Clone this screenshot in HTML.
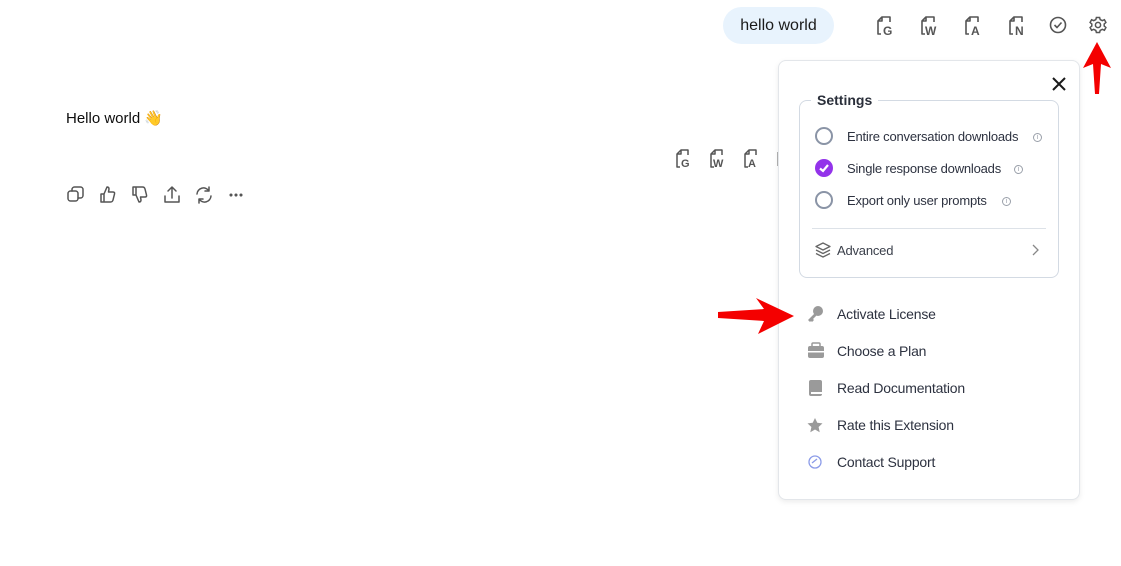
<!DOCTYPE html>
<html><head><meta charset="utf-8"><style>
*{box-sizing:border-box;margin:0;padding:0}
body{width:1121px;height:566px;background:#fff;font-family:"Liberation Sans",sans-serif;position:relative;overflow:hidden;color:#0d0d0d}
.abs{position:absolute}
svg{display:block}
.bubble{left:723px;top:7px;width:111px;height:37px;border-radius:19px;background:#e8f3fd;font-size:16px;line-height:37px;text-align:center;color:#1a1a1a}
.panel{left:778px;top:60px;width:302px;height:440px;border:1px solid #e3e6ea;border-radius:8px;background:#fff;box-shadow:0 2px 6px rgba(0,0,0,.08)}
.fs{left:799px;top:100px;width:260px;height:178px;border:1px solid #d3dae3;border-radius:8px}
.leg{left:811px;top:92px;background:#fff;padding:0 6px;font-size:14px;font-weight:bold;color:#2a2f3a}
.opt{font-size:13px;color:#2d3240;letter-spacing:-0.2px}
.radio{width:18px;height:18px;border:2px solid #8a94a6;border-radius:50%}
.info{width:9px;height:9px;border:1px solid #9aa0aa;border-radius:50%;font-size:7px;line-height:7px;text-align:center;color:#9aa0aa}
.menu{font-size:14px;color:#2d3240;letter-spacing:-0.2px}
</style></head><body>
<div class="abs bubble">hello world</div>

<!-- top toolbar icons -->
<svg class="abs" style="left:874px;top:13px" width="240" height="26">
 <g fill="none" stroke="#555" stroke-width="1.6" stroke-linejoin="round">
  <path d="M7 21 H4 V8 L8 4 H16 V9"/><path d="M4 8 H8 V4"/>
  <path d="M51 21 H48 V8 L52 4 H60 V9"/><path d="M48 8 H52 V4"/>
  <path d="M95 21 H92 V8 L96 4 H104 V9"/><path d="M92 8 H96 V4"/>
  <path d="M139 21 H136 V8 L140 4 H148 V9"/><path d="M136 8 H140 V4"/>
  <circle cx="184" cy="12" r="7.5"/><path d="M180.5 12 L183 14.5 L187.5 9.5"/>
 </g>
 <g font-family="Liberation Sans" font-weight="bold" font-size="12" fill="#555">
  <text x="9" y="22">G</text><text x="51" y="22">W</text><text x="97" y="22">A</text><text x="141" y="22">N</text>
 </g>
 <g transform="translate(224 12)" fill="none" stroke="#555" stroke-width="1.5">
  <path d="M-1.6 -7.5 L1.6 -7.5 L2.2 -5.4 L4.3 -4.3 L6.4 -5.3 L7.9 -2.5 L6.2 -1 L6.2 1 L7.9 2.5 L6.4 5.3 L4.3 4.3 L2.2 5.4 L1.6 7.5 L-1.6 7.5 L-2.2 5.4 L-4.3 4.3 L-6.4 5.3 L-7.9 2.5 L-6.2 1 L-6.2 -1 L-7.9 -2.5 L-6.4 -5.3 L-4.3 -4.3 L-2.2 -5.4 Z"/>
  <circle r="2.6"/>
 </g>
</svg>
<!-- red up arrow -->
<svg class="abs" style="left:1083px;top:40px" width="30" height="56"><path d="M14 2 L28 28 L18 24 L16 54 L12 54 L10 24 L0 28 Z" fill="#f40000"/></svg>

<div class="abs" style="left:66px;top:109px;font-size:15px">Hello world <span style="font-size:15px">👋</span></div>

<!-- mid icons -->
<svg class="abs" style="left:673px;top:146px" width="110" height="26">
 <g fill="none" stroke="#555" stroke-width="1.5" stroke-linejoin="round">
  <path d="M7 21 H4 V8 L8 4 H15 V9"/><path d="M4 8 H8 V4"/>
  <path d="M41 21 H38 V8 L42 4 H49 V9"/><path d="M38 8 H42 V4"/>
  <path d="M75 21 H72 V8 L76 4 H83 V9"/><path d="M72 8 H76 V4"/>
  <path d="M105 6 V20" stroke="#999"/>
 </g>
 <g font-family="Liberation Sans" font-weight="bold" font-size="11" fill="#555">
  <text x="8" y="21">G</text><text x="40" y="21">W</text><text x="75" y="21">A</text>
 </g>
</svg>

<!-- action icons -->
<svg class="abs" style="left:64px;top:183px" width="190" height="24" fill="none" stroke="#555" stroke-width="1.5" stroke-linejoin="round" stroke-linecap="round">
 <rect x="4" y="8" width="10" height="10" rx="2.5"/><path d="M8 8 V6.5 A2.5 2.5 0 0 1 10.5 4 H16.5 A2.5 2.5 0 0 1 19 6.5 V12.5 A2.5 2.5 0 0 1 16.5 15 H14"/>
 <path d="M37 11 H40 V19 H37 Z M40 11 L43 4 Q45 4 45 6 L44.5 9 H49 Q51 9 50.5 11 L49 17 Q48.5 19 46.5 19 H40"/>
 <path d="M69 12 H72 V4 H69 Z M72 12 L75 19 Q77 19 77 17 L76.5 14 H81 Q83 14 82.5 12 L81 6 Q80.5 4 78.5 4 H72"/>
 <path d="M108 15 V4 M104 8 L108 4 L112 8 M101 13 V19 H115 V13"/>
 <path d="M133 11 A6.5 6.5 0 0 1 145 8 M145 4 V8 H141 M147 13 A6.5 6.5 0 0 1 135 16 M135 20 V16 H139"/>
 <circle cx="167" cy="12" r=".8" fill="#555"/><circle cx="172" cy="12" r=".8" fill="#555"/><circle cx="177" cy="12" r=".8" fill="#555"/>
</svg>

<div class="abs panel"></div>
<svg class="abs" style="left:1050px;top:75px" width="18" height="18"><path d="M3 3 L15 15 M15 3 L3 15" stroke="#1a1a1a" stroke-width="2"/></svg>
<div class="abs fs"></div>
<div class="abs leg">Settings</div>

<div class="abs radio" style="left:815px;top:127px"></div>
<div class="abs opt" style="left:847px;top:129px">Entire conversation downloads</div>
<div class="abs info" style="left:1033px;top:133px">i</div>
<div class="abs" style="left:815px;top:159px;width:18px;height:18px;border-radius:50%;background:#9333ea"></div>
<svg class="abs" style="left:815px;top:159px" width="18" height="18"><path d="M5 9.5 L8 12 L13 6" stroke="#fff" stroke-width="2.2" fill="none"/></svg>
<div class="abs opt" style="left:847px;top:161px">Single response downloads</div>
<div class="abs info" style="left:1014px;top:165px">i</div>
<div class="abs radio" style="left:815px;top:191px"></div>
<div class="abs opt" style="left:847px;top:193px">Export only user prompts</div>
<div class="abs info" style="left:1002px;top:197px">i</div>
<div class="abs" style="left:812px;top:228px;width:234px;height:1px;background:#dde2e8"></div>
<svg class="abs" style="left:814px;top:241px" width="18" height="18" fill="none" stroke="#666" stroke-width="1.3" stroke-linejoin="round"><path d="M9 2 L16 5.5 L9 9 L2 5.5 Z M2 9 L9 12.5 L16 9 M2 12.5 L9 16 L16 12.5"/></svg>
<div class="abs" style="left:837px;top:243px;font-size:13px;color:#3a3f4a;letter-spacing:-0.2px">Advanced</div>
<svg class="abs" style="left:1030px;top:243px" width="10" height="14"><path d="M3 2 L8 7 L3 12" stroke="#888" stroke-width="1.3" fill="none"/></svg>

<!-- menu -->
<svg class="abs" style="left:806px;top:305px" width="18" height="175" fill="#9a9a9a">
 <circle cx="12" cy="6" r="5"/><path d="M9 8 L2 15 L4 17 L5 16 L6 17 L8 15 L7 14 L11 10 Z"/>
 <rect x="2" y="41" width="16" height="12" rx="2"/><rect x="6" y="38" width="8" height="4" rx="1" fill="none" stroke="#9a9a9a" stroke-width="1.5"/><rect x="2" y="46" width="16" height="1.5" fill="#fff"/>
 <rect x="3" y="75" width="13" height="16" rx="2"/><rect x="5" y="87" width="11" height="2" fill="#fff"/>
 <path d="M9 113 L11.3 117.8 L16.5 118.4 L12.6 122 L13.7 127.2 L9 124.5 L4.3 127.2 L5.4 122 L1.5 118.4 L6.7 117.8 Z"/>
 <circle cx="9" cy="157" r="6" fill="none" stroke="#8b9be8" stroke-width="1.3"/><path d="M6 158 L11 154" stroke="#8b9be8" stroke-width="1.3"/>
</svg>
<div class="abs menu" style="left:837px;top:306px">Activate License</div>
<div class="abs menu" style="left:837px;top:343px">Choose a Plan</div>
<div class="abs menu" style="left:837px;top:380px">Read Documentation</div>
<div class="abs menu" style="left:837px;top:417px">Rate this Extension</div>
<div class="abs menu" style="left:837px;top:454px">Contact Support</div>

<!-- red left arrow -->
<svg class="abs" style="left:716px;top:296px" width="80" height="40"><path d="M78 20 L40 2 L48 13 L2 16 L2 22 L48 25 L42 38 Z" fill="#f40000"/></svg>
</body></html>
